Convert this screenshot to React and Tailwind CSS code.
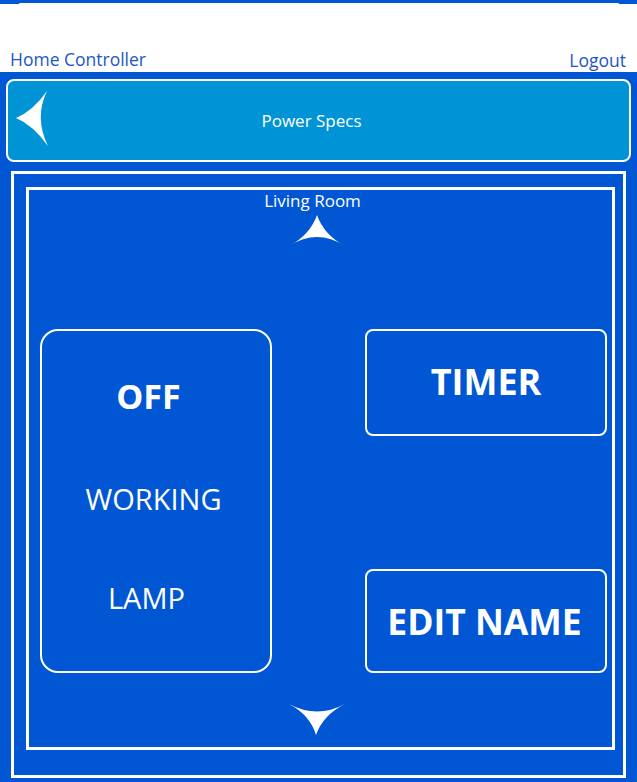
import React from 'react'

const font = { fontFamily: '"Open Sans", "Noto Sans", sans-serif' }

function UpArrow() {
  return (
    <svg width="56" height="31" viewBox="0 0 56 31" className="block">
      <path d="M28 0 Q35 20 56 31 Q28 13 0 31 Q21 20 28 0 Z" fill="white" />
    </svg>
  )
}

function DownArrow() {
  return (
    <svg width="56" height="32" viewBox="0 0 56 32" className="block">
      <path d="M0 1 Q28 16 56 1 Q34 12 27 32 Q21 12 0 1 Z" fill="white" />
    </svg>
  )
}

function BackArrow() {
  return (
    <svg width="32" height="55" viewBox="0 0 32 55" className="block">
      <path d="M31 0 Q18 27 32 55 Q17 34 0 27 Q17 20 31 0 Z" fill="white" />
    </svg>
  )
}

export default function App() {
  return (
    <div className="w-[637px] h-[782px] overflow-hidden bg-white flex flex-col" style={font}>
      {/* bottom of the element above */}
      <div className="h-[4px] bg-[#0157d3] flex justify-center">
        <div className="w-[600px] h-[1px] mt-[3px] bg-white rounded-b" />
      </div>

      {/* header */}
      <div className="h-[68px] flex justify-between items-end px-[10px] text-[#1d56c2] text-[17.5px]">
        <span className="leading-[24px] mb-[1px]">Home Controller</span>
        <span className="leading-[24px] mb-0 mr-[1px]">Logout</span>
      </div>

      {/* main */}
      <div className="flex-1 bg-[#0157d3] px-[6px] pt-[7px] flex flex-col">
        <div className="relative h-[83px] rounded-lg border-2 border-white bg-[#0094d6] flex items-center justify-center pr-[14px]">
          <div className="absolute left-[8px] top-[10px]">
            <BackArrow />
          </div>
          <span className="text-white text-[17px]">Power Specs</span>
        </div>

        <div className="mt-[9px] mx-[5px] h-[607px] border-[3px] border-white pt-[13px] pl-[12px] pr-[8px]">
          <div className="h-[563px] border-[3px] border-white flex flex-col items-center text-white">
            <span className="text-[17px] leading-[20px] mt-[1px] mr-[16px]">Living Room</span>
            <div className="mt-[4px] mr-[8px]">
              <UpArrow />
            </div>

            <div className="w-full flex justify-between pl-[11px] pr-[5px] mt-[83px]">
              <div className="w-[232px] h-[344px] rounded-[18px] border-2 border-white flex flex-col items-center">
                <span className="font-bold text-[34px] leading-[40px] mt-[45px] mr-[15px]">OFF</span>
                <span className="text-[29px] leading-[36px] mt-[65px] mr-[5px]">WORKING</span>
                <span className="text-[29px] leading-[36px] mt-[63px] mr-[19px]">LAMP</span>
              </div>
              <div className="flex flex-col justify-between h-[344px]">
                <div className="w-[242px] h-[107px] rounded-lg border-2 border-white flex items-center justify-center">
                  <span className="font-bold text-[36px] leading-[40px] -mt-[1px]">TIMER</span>
                </div>
                <div className="w-[242px] h-[104px] rounded-lg border-2 border-white flex items-center justify-center">
                  <span className="font-bold text-[35.5px] leading-[40px] mr-[3px]">EDIT NAME</span>
                </div>
              </div>
            </div>

            <div className="mt-[30px] mr-[8px]">
              <DownArrow />
            </div>
          </div>
        </div>
      </div>
    </div>
  )
}
